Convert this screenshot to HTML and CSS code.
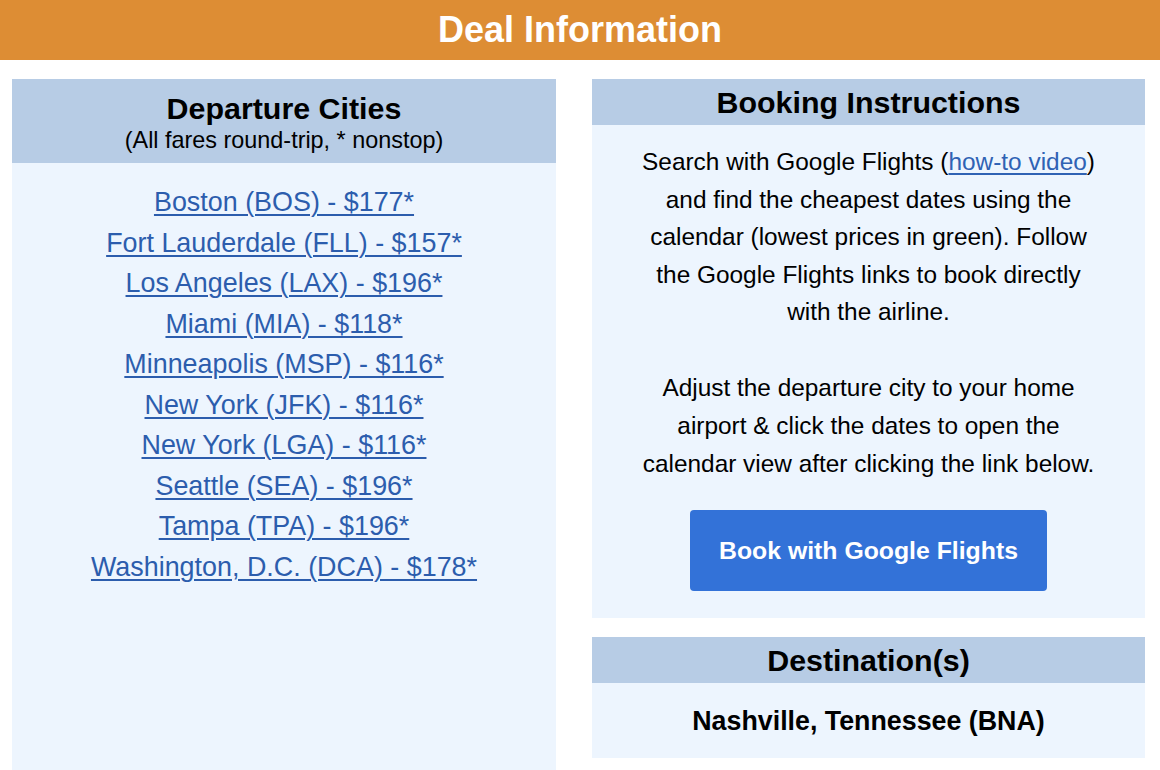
FILE: index.html
```html
<!DOCTYPE html>
<html lang="en">
<head>
<meta charset="utf-8">
<title>Deal Information</title>
<link rel="stylesheet" href="styles.css">
</head>
<body>
<header class="banner"><h1 class="banner-title">Deal Information</h1></header>
<main class="deal-grid">
  <section class="panel panel-cities">
    <div class="panel-head panel-head-tall">
      <h2 class="panel-title">Departure Cities</h2>
      <p class="panel-sub">(All fares round-trip, * nonstop)</p>
    </div>
    <div class="panel-body cities-body">
      <ul class="city-list">
        <li><a href="#">Boston (BOS) - $177*</a></li>
        <li><a href="#">Fort Lauderdale (FLL) - $157*</a></li>
        <li><a href="#">Los Angeles (LAX) - $196*</a></li>
        <li><a href="#">Miami (MIA) - $118*</a></li>
        <li><a href="#">Minneapolis (MSP) - $116*</a></li>
        <li><a href="#">New York (JFK) - $116*</a></li>
        <li><a href="#">New York (LGA) - $116*</a></li>
        <li><a href="#">Seattle (SEA) - $196*</a></li>
        <li><a href="#">Tampa (TPA) - $196*</a></li>
        <li><a href="#">Washington, D.C. (DCA) - $178*</a></li>
      </ul>
    </div>
  </section>
  <div class="right-col">
    <section class="panel">
      <div class="panel-head"><h2 class="panel-title">Booking Instructions</h2></div>
      <div class="panel-body booking-body">
        <p class="booking-text">Search with Google Flights (<a href="#">how-to video</a>) and find the cheapest dates using the calendar (lowest prices in green). Follow the Google Flights links to book directly with the airline.</p>
        <p class="booking-text booking-second">Adjust the departure city to your home airport &amp; click the dates to open the calendar view after clicking the link below.</p>
        <a class="book-btn" href="#">Book with Google Flights</a>
      </div>
    </section>
    <section class="panel">
      <div class="panel-head"><h2 class="panel-title">Destination(s)</h2></div>
      <div class="panel-body dest-body">
        <p class="dest-name">Nashville, Tennessee (BNA)</p>
      </div>
    </section>
  </div>
</main>
</body>
</html>
```
FILE: styles.css
```css
* { box-sizing: border-box; }
html, body { margin: 0; padding: 0; background: #ffffff; }
body {
  font-family: "Liberation Sans", Arial, Helvetica, sans-serif;
  color: #000000;
  overflow: hidden;
}
.banner {
  background: #dd8d34;
  height: 60px;
  display: flex;
  align-items: center;
  justify-content: center;
}
.banner-title {
  margin: 0;
  color: #ffffff;
  font-size: 36px;
  line-height: 60px;
  font-weight: 700;
}
.deal-grid {
  display: grid;
  grid-template-columns: 544px 553px;
  column-gap: 36px;
  padding: 19px 15px 0 12px;
  align-items: start;
}
.right-col {
  display: flex;
  flex-direction: column;
  gap: 19px;
}
.panel { background: #edf5fe; }
.panel-head {
  background: #b7cce5;
  text-align: center;
  padding: 5px 0;
}
.panel-head-tall { padding: 11px 0 9px; }
.panel-title {
  margin: 0;
  font-size: 30.4px;
  line-height: 36px;
  font-weight: 700;
}
.panel-sub {
  margin: 0;
  font-size: 23.4px;
  line-height: 28px;
}
.panel-body { text-align: center; }
.cities-body {
  padding-top: 19px;
  min-height: 640px;
}
.city-list {
  list-style: none;
  margin: 0;
  padding: 0;
  font-size: 26.9px;
  line-height: 40.5px;
}
.city-list a {
  color: #2c5dad;
  text-decoration: underline;
  text-decoration-thickness: 1.5px;
  text-underline-offset: 3px;
}
.booking-body {
  padding: 18px 20px 27px;
  display: flex;
  flex-direction: column;
  align-items: center;
}
.booking-text {
  margin: 0;
  max-width: 462px;
  font-size: 24.4px;
  line-height: 37.6px;
}
.booking-text a {
  color: #2f62b4;
  text-decoration: underline;
  text-decoration-thickness: 1.5px;
  text-underline-offset: 3px;
}
.booking-second { margin-top: 38.5px; }
.book-btn {
  margin-top: 28px;
  display: block;
  width: 357px;
  height: 81px;
  line-height: 81px;
  background: #3372d8;
  border-radius: 4px;
  color: #ffffff;
  font-weight: 700;
  font-size: 24.8px;
  text-decoration: none;
  text-align: center;
}
.dest-body { padding: 22px 0 21px; }
.dest-name {
  margin: 0;
  font-size: 26.8px;
  line-height: 32px;
  font-weight: 700;
}
```
